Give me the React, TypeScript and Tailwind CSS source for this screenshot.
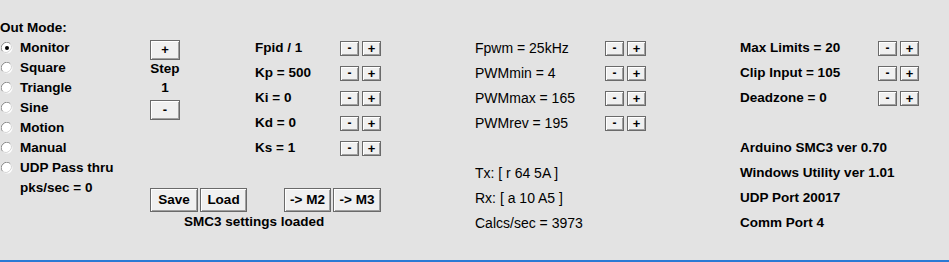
import React from "react";

const FONT = { fontFamily: '"Liberation Sans", Arial, sans-serif' };

function Radio({ checked }: { checked?: boolean }) {
  return (
    <svg width="12" height="12" viewBox="0 0 12 12" className="shrink-0">
      <circle cx="6" cy="6" r="5.5" fill="#ffffff" />
      <path d="M1.5 9.2 A5.5 5.5 0 0 1 9.2 1.5" stroke="#8a8a8a" strokeWidth="1" fill="none" />
      <path d="M9.2 1.5 A5.5 5.5 0 0 1 1.5 9.2" stroke="#d4d4d4" strokeWidth="1" fill="none" />
      {checked && <circle cx="6" cy="6" r="2" fill="#000000" />}
    </svg>
  );
}

function Btn({ children, className }: { children: React.ReactNode; className: string }) {
  return (
    <div
      className={
        "flex items-center justify-center bg-[#f0f0f0] border border-[#6a6a6a] font-bold text-black shadow-[inset_1px_1px_0_#ffffff,inset_-1px_-1px_0_#a0a0a0] " +
        className
      }
    >
      {children}
    </div>
  );
}

function PM() {
  return (
    <div className="flex gap-[3px]">
      <Btn className="w-[19px] h-[15px] text-[12px] leading-none">-</Btn>
      <Btn className="w-[19px] h-[15px] text-[13px] leading-none">+</Btn>
    </div>
  );
}

export default function App() {
  const modes = ["Monitor", "Square", "Triangle", "Sine", "Motion", "Manual", "UDP Pass thru"];
  return (
    <div
      style={FONT}
      className="w-[949px] h-[262px] bg-[#e3e3e3] border-b-2 border-[#2a7ad5] flex text-black text-[13.5px] overflow-hidden"
    >
      {/* Column A */}
      <div className="w-[150px] pt-[18px] font-bold">
        <div className="h-[20px] flex items-center">Out Mode:</div>
        {modes.map((m, i) => (
          <div key={m} className="h-[20px] flex items-center">
            <div className="ml-[1px] mr-[7px] flex">
              <Radio checked={i === 0} />
            </div>
            <span>{m}</span>
          </div>
        ))}
        <div className="h-[20px] flex items-center pl-[20px]">pks/sec = 0</div>
      </div>

      {/* Column B */}
      <div className="w-[231px] pt-[36px] font-bold">
        <div className="flex h-[125px]">
          <div className="w-[30px] mt-[4px] flex flex-col items-center">
            <Btn className="w-[30px] h-[20px] text-[13px]">+</Btn>
            <div className="h-[19px] flex items-center">Step</div>
            <div className="h-[19px] flex items-center">1</div>
            <Btn className="w-[30px] h-[20px] mt-[2px] text-[13px]">-</Btn>
          </div>
          <div className="ml-[75px] flex flex-col">
            {["Fpid / 1", "Kp = 500", "Ki = 0", "Kd = 0", "Ks = 1"].map((t) => (
              <div key={t} className="h-[25px] flex items-center">
                <div className="w-[85px]">{t}</div>
                <div className="-mt-[1px]">
                  <PM />
                </div>
              </div>
            ))}
          </div>
        </div>
        <div className="mt-[27px] flex">
          <Btn className="w-[48px] h-[24px]">Save</Btn>
          <Btn className="w-[47px] h-[24px] ml-[2px]">Load</Btn>
          <Btn className="w-[47px] h-[24px] ml-[37px]">-&gt; M2</Btn>
          <Btn className="w-[48px] h-[24px] ml-[2px]">-&gt; M3</Btn>
        </div>
        <div className="h-[20px] flex items-center ml-[34px]">SMC3 settings loaded</div>
      </div>

      {/* Column C */}
      <div className="pl-[94px] pt-[36px] text-[14px] font-normal">
        {["Fpwm = 25kHz", "PWMmin = 4", "PWMmax = 165", "PWMrev = 195"].map((t) => (
          <div key={t} className="h-[25px] flex items-center">
            <div className="w-[130px]">{t}</div>
            <div className="-mt-[1px]">
              <PM />
            </div>
          </div>
        ))}
        <div className="h-[25px]" />
        <div className="h-[25px] flex items-center">Tx: [ r 64 5A ]</div>
        <div className="h-[25px] flex items-center">Rx: [ a 10 A5 ]</div>
        <div className="h-[25px] flex items-center">Calcs/sec = 3973</div>
      </div>

      {/* Column D */}
      <div className="pl-[94px] pt-[36px] font-bold">
        {["Max Limits = 20", "Clip Input = 105", "Deadzone = 0"].map((t) => (
          <div key={t} className="h-[25px] flex items-center">
            <div className="w-[138px]">{t}</div>
            <div className="-mt-[1px]">
              <PM />
            </div>
          </div>
        ))}
        <div className="h-[25px]" />
        <div className="h-[25px] flex items-center">Arduino SMC3 ver 0.70</div>
        <div className="h-[25px] flex items-center">Windows Utility ver 1.01</div>
        <div className="h-[25px] flex items-center">UDP Port 20017</div>
        <div className="h-[25px] flex items-center">Comm Port 4</div>
      </div>
    </div>
  );
}
